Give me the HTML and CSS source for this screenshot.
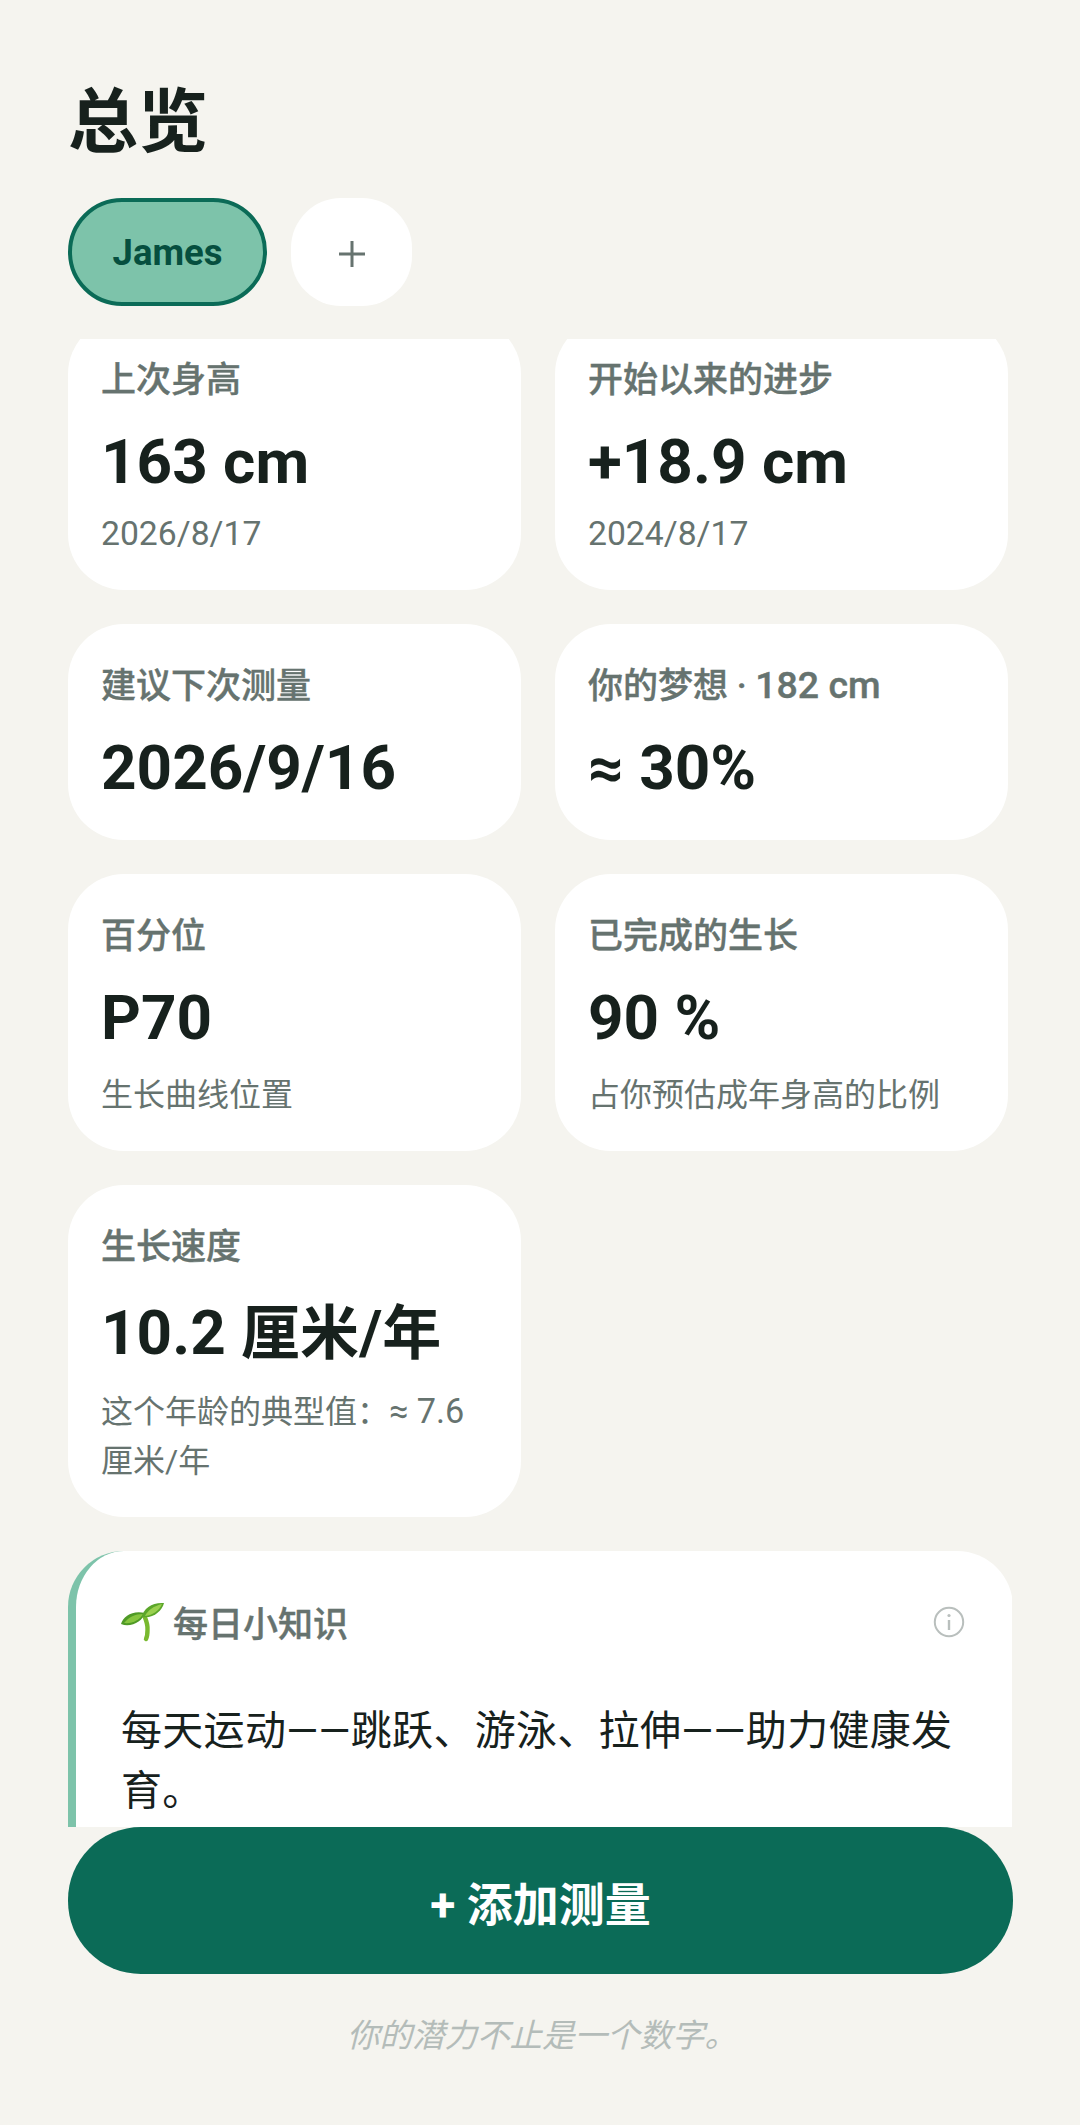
FILE: index.html
```html
<!DOCTYPE html>
<html lang="zh-CN">
<head>
    <meta charset="UTF-8">
    <meta name="viewport" content="width=device-width, initial-scale=1.0">
    <title>总览</title>
    <link rel="stylesheet" href="styles.css">
</head>
<body>
    <div class="page">
        <h1 class="title">总览</h1>

        <div class="profiles">
            <div class="chip chip-active">James</div>
            <div class="chip chip-add">
                <svg class="plus" width="28" height="28" viewBox="0 0 28 28"><path d="M14 1v26M1 14h26" stroke="#66736f" stroke-width="3" fill="none"/></svg>
            </div>
        </div>

        <!-- scrolled list, first card is cut off at the top -->
        <div class="scroller">
            <div class="scroll-inner">
                <div class="grid">
                    <div class="card card-first">
                        <div class="label">上次身高</div>
                        <div class="value">163 cm</div>
                        <div class="sub sub-date">2026/8/17</div>
                    </div>
                    <div class="card card-first">
                        <div class="label">开始以来的进步</div>
                        <div class="value">+18.9 cm</div>
                        <div class="sub sub-date">2024/8/17</div>
                    </div>
                    <div class="card">
                        <div class="label">建议下次测量</div>
                        <div class="value">2026/9/16</div>
                    </div>
                    <div class="card">
                        <div class="label">你的梦想 · <span class="num">182 cm</span></div>
                        <div class="value">≈ 30%</div>
                    </div>
                    <div class="card">
                        <div class="label">百分位</div>
                        <div class="value">P70</div>
                        <div class="sub">生长曲线位置</div>
                    </div>
                    <div class="card">
                        <div class="label">已完成的生长</div>
                        <div class="value">90 %</div>
                        <div class="sub">占你预估成年身高的比例</div>
                    </div>
                    <div class="card card-speed">
                        <div class="label">生长速度</div>
                        <div class="value value-tall">10.2 <span class="unit">厘米</span>/<span class="unit">年</span></div>
                        <div class="sub">这个年龄的典型值：<span class="num">≈ 7.6</span> 厘米/年</div>
                    </div>
                </div>

                <div class="tip">
                    <div class="tip-head">
                        <div class="tip-title">
                            <svg class="sprout" width="44" height="40" viewBox="0 0 44 40">
                                <path d="M23 13c2 5 4 9 3.500 15 0 4-.5 7-1.500 9" stroke="#79b92f" stroke-width="4.400" fill="none" stroke-linecap="round"/>
                                <path d="M0 22C2 14 12 8 24 11 22 19 10 26 0 22z" fill="#4f9a26"/>
                                <path d="M3 21c5-6 11-9 19-9-3 6-11 10-19 9z" fill="#86c53f"/>
                                <path d="M21 15C22 6 32 0 43 1 41 9 32 17 21 15z" fill="#5ba62a"/>
                                <path d="M24 14c3-6 9-10 17-12-3 7-9 11-17 12z" fill="#9ad04f"/>
                            </svg>
                            <span>每日小知识</span>
                        </div>
                        <svg class="info" width="32" height="32" viewBox="0 0 32 32">
                            <circle cx="16" cy="16" r="14.2" stroke="#b9bfbd" stroke-width="2" fill="none"/>
                            <path d="M16 14v10" stroke="#b9bfbd" stroke-width="2.400"/>
                            <circle cx="16" cy="9.500" r="1.600" fill="#b9bfbd"/>
                        </svg>
                    </div>
                    <p class="tip-text">每天运动——跳跃、游泳、拉伸——助力健康发育。</p>
                </div>
            </div>
        </div>

        <div class="add-btn">+ 添加测量</div>
        <p class="footer">你的潜力不止是一个数字。</p>
    </div>
</body>
</html>
```

FILE: styles.css
```css
* {
    box-sizing: border-box;
}
html, body {
    margin: 0;
    padding: 0;
}
body {
    background-color: #f5f4ef;
    font-family: Roboto, "Noto Sans CJK SC", sans-serif;
    color: #17211d;
}
.page {
    width: 1080px;
    height: 2125px;
    padding: 0 68px;
    overflow: hidden;
}
.title {
    margin: 0;
    padding-top: 78px;
    font-size: 70px;
    line-height: 90px;
    font-weight: 700;
}
.profiles {
    display: flex;
    gap: 24px;
    margin-top: 30px;
}
.chip {
    height: 108px;
    display: flex;
    align-items: center;
    justify-content: center;
}
.chip-active {
    width: 199px;
    border: 4px solid #0b6b57;
    border-radius: 54px;
    background-color: #7dc3aa;
    color: #064f3f;
    font-size: 36.5px;
    font-weight: 700;
}
.chip-add {
    width: 121px;
    border-radius: 50px;
    background-color: #fff;
}
.plus {
    margin-top: 3px;
}
.scroller {
    height: 1488px;
    margin-top: 33px;
    overflow: hidden;
}
.scroll-inner {
    margin-top: -21px;
}
.grid {
    display: grid;
    grid-template-columns: 453px 453px;
    column-gap: 34px;
    row-gap: 34px;
    align-items: start;
}
.card {
    background-color: #fff;
    border-radius: 56px;
    padding: 40px 33px 32px 33px;
}
.card-first {
    padding-bottom: 35px;
}
.card-speed {
    padding-bottom: 31px;
}
.label {
    font-size: 35px;
    line-height: 46px;
    font-weight: 500;
    -webkit-text-stroke: 0.4px #66736f;
    color: #66736f;
}
.num {
    font-size: 1.07em;
    line-height: 1;
}
.value {
    margin-top: 18px;
    font-size: 62px;
    line-height: 80px;
    font-weight: 700;
}
.value-tall {
    line-height: 88px;
}
.unit {
    font-size: 59px;
    line-height: 1;
}
.sub {
    margin-top: 13px;
    font-size: 32px;
    line-height: 48px;
    color: #66736f;
}
.sub-date {
    margin-top: 10px;
    font-size: 33.7px;
    line-height: 43px;
}
.card-speed .sub {
    margin-top: 11px;
    line-height: 49px;
}
.tip {
    width: 945px;
    height: 400px;
    margin-top: 34px;
    padding: 45px 44px 0 45px;
    background-color: #fff;
    border-left: 8px solid #7dc3aa;
    border-radius: 56px;
}
.tip-head {
    display: flex;
    align-items: center;
    justify-content: space-between;
}
.tip-title {
    display: flex;
    align-items: center;
    gap: 8px;
    font-size: 35px;
    font-weight: 500;
    -webkit-text-stroke: 0.4px #66736f;
    color: #66736f;
}
.info {
    margin-right: 4px;
}
.tip-text {
    margin: 54px 0 0 0;
    font-size: 41px;
    letter-spacing: 0.3px;
    line-height: 60px;
}
.add-btn {
    width: 945px;
    height: 147px;
    display: flex;
    align-items: center;
    justify-content: center;
    background-color: #0b6b57;
    border-radius: 73px;
    color: #fff;
    font-size: 46px;
    font-weight: 700;
}
.footer {
    margin: 40px 0 0 0;
    padding-left: 3px;
    width: 945px;
    text-align: center;
    font-size: 32.5px;
    line-height: 44px;
    font-style: italic;
    color: #b4bcb9;
}
```
